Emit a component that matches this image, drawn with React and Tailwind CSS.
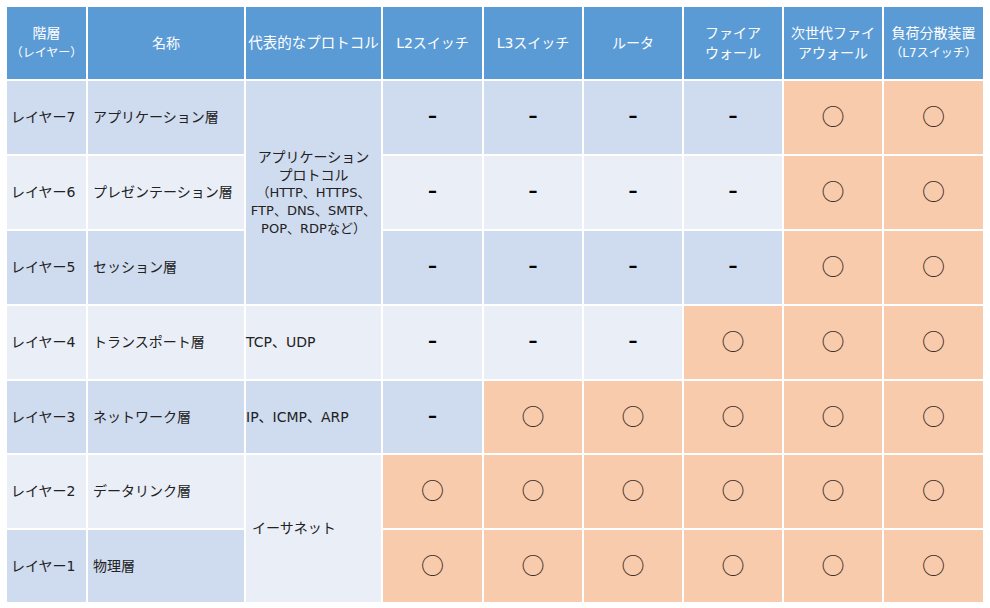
import React from 'react';

const HEAD = 'bg-[#5b9bd5] text-white text-center align-middle border-2 border-white leading-[20px]';
const DARK = 'bg-[#cfdbee]';
const LIGHT = 'bg-[#e9eef7]';
const ORANGE = 'bg-[#f8cbad]';

// 0 = dash, 1 = circle  (L2, L3, router, FW, NGFW, LB)
const rows = [
  { layer: 'レイヤー7', name: 'アプリケーション層', h: 'h-[75px]', marks: [0, 0, 0, 0, 1, 1] },
  { layer: 'レイヤー6', name: 'プレゼンテーション層', h: 'h-[75px]', marks: [0, 0, 0, 0, 1, 1] },
  { layer: 'レイヤー5', name: 'セッション層', h: 'h-[75px]', marks: [0, 0, 0, 0, 1, 1] },
  { layer: 'レイヤー4', name: 'トランスポート層', h: 'h-[75px]', marks: [0, 0, 0, 1, 1, 1] },
  { layer: 'レイヤー3', name: 'ネットワーク層', h: 'h-[74px]', marks: [0, 1, 1, 1, 1, 1] },
  { layer: 'レイヤー2', name: 'データリンク層', h: 'h-[75px]', marks: [1, 1, 1, 1, 1, 1] },
  { layer: 'レイヤー1', name: '物理層', h: 'h-[74px]', marks: [1, 1, 1, 1, 1, 1] },
];

const Mark = ({ on }) =>
  on ? (
    <span className="text-[#3b2a1e] text-[23px] leading-none font-['Noto_Sans_CJK_JP',sans-serif]">○</span>
  ) : (
    <span className="text-black text-[18px] font-bold leading-none font-['DejaVu_Sans',sans-serif]">–</span>
  );

const protocolCell = (i) => {
  const base = 'border-2 border-white align-middle text-[14px] whitespace-nowrap';
  if (i === 0)
    return (
      <td rowSpan={3} className={`${base} ${DARK} text-center leading-[18px]`}>
        <div>アプリケーション</div>
        <div>プロトコル</div>
        <div className="text-[13px]">（HTTP、HTTPS、</div>
        <div className="text-[13px]">FTP、DNS、SMTP、</div>
        <div className="text-[13px]">POP、RDPなど）</div>
      </td>
    );
  if (i === 3) return <td className={`${base} ${LIGHT} pl-0`}>TCP、UDP</td>;
  if (i === 4) return <td className={`${base} ${DARK} pl-0`}>IP、ICMP、ARP</td>;
  if (i === 5)
    return (
      <td rowSpan={2} className={`${base} ${LIGHT} pl-[6px]`}>
        イーサネット
      </td>
    );
  return null;
};

export default function App() {
  return (
    <div className="w-[990px] h-[608px] bg-white pt-[5px] pl-[5px] text-[#222] font-['DejaVu_Sans','Noto_Sans_CJK_JP',sans-serif]">
      <table className="table-fixed border-collapse w-[980px] text-[14px]">
        <colgroup>
          <col className="w-[81px]" />
          <col className="w-[158px]" />
          <col className="w-[137px]" />
          <col className="w-[101px]" />
          <col className="w-[100px]" />
          <col className="w-[100px]" />
          <col className="w-[100px]" />
          <col className="w-[100px]" />
          <col className="w-[101px]" />
        </colgroup>
        <thead>
          <tr className="h-[74px]">
            <th className={`${HEAD} font-normal`}>
              <div>階層</div>
              <div className="text-[12px]">（レイヤー）</div>
            </th>
            <th className={`${HEAD} font-normal`}>名称</th>
            <th className={`${HEAD} font-normal whitespace-nowrap text-[14.5px]`}>代表的なプロトコル</th>
            <th className={`${HEAD} font-normal`}>L2スイッチ</th>
            <th className={`${HEAD} font-normal`}>L3スイッチ</th>
            <th className={`${HEAD} font-normal`}>ルータ</th>
            <th className={`${HEAD} font-normal`}>
              <div>ファイア</div>
              <div>ウォール</div>
            </th>
            <th className={`${HEAD} font-normal`}>
              <div>次世代ファイ</div>
              <div>アウォール</div>
            </th>
            <th className={`${HEAD} font-normal`}>
              <div className="whitespace-nowrap">負荷分散装置</div>
              <div className="text-[12px]">（L7スイッチ）</div>
            </th>
          </tr>
        </thead>
        <tbody>
          {rows.map((r, i) => {
            const shade = i % 2 === 0 ? DARK : LIGHT;
            return (
              <tr key={r.layer} className={r.h}>
                <td className={`border-2 border-white align-middle pl-[4px] whitespace-nowrap ${shade}`}>{r.layer}</td>
                <td className={`border-2 border-white align-middle pl-[5px] whitespace-nowrap ${shade}`}>{r.name}</td>
                {protocolCell(i)}
                {r.marks.map((m, j) => (
                  <td
                    key={j}
                    className={`border-2 border-white align-middle text-center ${m ? ORANGE : shade}`}
                  >
                    <Mark on={m} />
                  </td>
                ))}
              </tr>
            );
          })}
        </tbody>
      </table>
    </div>
  );
}
